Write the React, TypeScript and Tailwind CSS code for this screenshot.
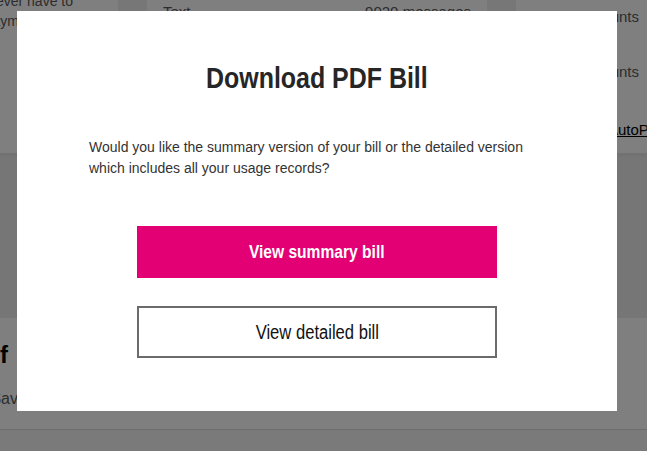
import React from 'react';

export default function App() {
  return (
    <div className="relative w-[647px] h-[451px] overflow-hidden bg-[#f4f4f4] font-['Liberation_Sans',Arial,sans-serif]">
      {/* Page behind the dialog */}
      <div className="flex h-[153px] gap-[29px] bg-[#eeeeee]">
        <div className="w-[118px] shrink-0 bg-white text-[14px] leading-[20px] text-[#5a5a5a] -mt-[9px]">
          <div className="w-[73px] flex justify-end whitespace-nowrap">You'll never have to</div>
          <div className="w-[19px] flex justify-end whitespace-nowrap">to paym</div>
        </div>
        <div className="w-[340px] shrink-0 bg-white px-4 pt-[1px] text-[15px] text-[#5a5a5a]">
          <div className="flex justify-between">
            <span>Text</span>
            <span>9020 messages</span>
          </div>
        </div>
        <div className="flex-1 min-w-0 bg-white pl-4 pt-[7px] text-[15px] leading-[20px] text-[#5a5a5a] whitespace-nowrap">
          <div className="w-[107px] flex justify-end">Send/receive counts</div>
          <div className="w-[107px] flex justify-end mt-[35px]">Data amounts</div>
          <div className="mt-[38px] text-black underline">Sign up for AutoPay</div>
        </div>
      </div>
      <div className="h-[165px] border-t-[3px] border-[#e4e4e4] bg-[#ececec]" />
      <div className="h-[112px] bg-white border-b border-[#d8d8d8] pt-[19px]">
        <div className="w-[8px] flex justify-end whitespace-nowrap text-[24px] font-bold text-black">Pay on/of f</div>
        <div className="w-[18px] flex justify-end whitespace-nowrap mt-[14px] text-[16px] text-[#5a5a5a]">Sav</div>
      </div>

      {/* Overlay */}
      <div className="absolute inset-0 bg-black/50" />

      {/* Dialog */}
      <div className="absolute left-[17px] top-[11px] w-[600px] h-[400px] bg-white px-[72px] pt-[49px] flex flex-col">
        <h2 className="flex justify-center text-[29px] leading-[36px] font-bold text-[#262626] whitespace-nowrap">
          <span className="inline-block scale-x-[0.86]">Download PDF Bill</span>
        </h2>
        <p className="mt-[41px] text-[14px] leading-[21px] text-[#333333]">
          Would you like the summary version of your bill or the detailed version which includes all your usage records?
        </p>
        <div className="mt-[47px] flex flex-col items-center gap-[28px]">
          <button className="w-[360px] h-[52px] bg-[#e20074] text-white text-[19px] font-bold whitespace-nowrap">
            <span className="inline-block scale-x-[0.82]">View summary bill</span>
          </button>
          <button className="w-[360px] h-[52px] bg-white border-2 border-[#6b6b6b] text-[#111111] text-[20px] whitespace-nowrap">
            <span className="inline-block scale-x-[0.83]">View detailed bill</span>
          </button>
        </div>
      </div>
    </div>
  );
}
